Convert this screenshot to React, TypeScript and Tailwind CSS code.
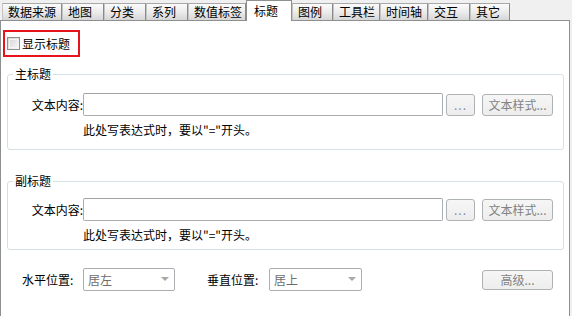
import React from "react";

const tabs: { label: string; w: string; selected?: boolean }[] = [
  { label: "数据来源", w: "w-[60px]" },
  { label: "地图", w: "w-[42px]" },
  { label: "分类", w: "w-[42px]" },
  { label: "系列", w: "w-[42px]" },
  { label: "数值标签", w: "w-[58px]" },
  { label: "标题", w: "w-[46px]", selected: true },
  { label: "图例", w: "w-[41px]" },
  { label: "工具栏", w: "w-[47px]" },
  { label: "时间轴", w: "w-[48px]" },
  { label: "交互", w: "w-[42px]" },
  { label: "其它", w: "w-[40px]" },
];

function Tab({ label, w, selected }: { label: string; w: string; selected?: boolean }) {
  if (selected) {
    return (
      <div className={`${w} h-[21px] -mb-px bg-white border border-b-0 border-[#8e8f8f] pl-[7px] pt-[2px] leading-[16px]`}>
        {label}
      </div>
    );
  }
  return (
    <div
      className={`${w} h-[17px] border border-b-0 border-l-[#c4c4c4] border-t-[#a8a8a8] border-r-[#8a8a8a] bg-linear-to-b from-[#fbfbfb] via-[#ececec] to-[#d6d6d6] pl-[5px] leading-[16px]`}
    >
      {label}
    </div>
  );
}

function DisabledButton({ children, w, h }: { children: React.ReactNode; w: string; h: string }) {
  return (
    <div
      className={`${w} ${h} flex items-center justify-center border border-[#adb2b5] rounded-[3px] bg-linear-to-b from-[#f6f6f6] to-[#ededed] text-[#838383]`}
    >
      {children}
    </div>
  );
}

function Arrow() {
  return (
    <svg width="8" height="5" viewBox="0 0 8 5">
      <polygon points="0,0 8,0 4,4" fill="#a7a7a7" />
    </svg>
  );
}

function Select({ value, w }: { value: string; w: string }) {
  return (
    <div
      className={`${w} h-[23px] flex items-center justify-between border border-[#abadb3] rounded-[2px] bg-white pl-[4px] pr-[5px] text-[#6d6d6d]`}
    >
      <span>{value}</span>
      <Arrow />
    </div>
  );
}

function TitleGroup({ title, mt, pt, pb }: { title: string; mt: string; pt: string; pb: string }) {
  return (
    <fieldset className={`${mt} ml-[6px] w-[557px] border border-[#d5dfe5] rounded-[3px] ${pt} ${pb}`}>
      <legend className="ml-[5px] px-[2px] leading-[16px]">{title}</legend>
      <div className="flex items-center">
        <div className="w-[75px] text-right">文本内容:</div>
        <div className="w-[360px] h-[23px] border border-[#abadb3] border-t-[#a3a3a3] rounded-[2px] bg-white" />
        <div className="ml-[3px]">
          <DisabledButton w="w-[29px]" h="h-[22px]">
            <span className="text-[#8a8aa8] tracking-[1px]">...</span>
          </DisabledButton>
        </div>
        <div className="ml-[7px]">
          <DisabledButton w="w-[71px]" h="h-[22px]">
            文本样式...
          </DisabledButton>
        </div>
      </div>
      <div className="pl-[75px] mt-[6px] leading-[16px]">此处写表达式时，要以"="开头。</div>
    </fieldset>
  );
}

export default function App() {
  return (
    <div className="w-[572px] h-[316px] bg-[#f0f0f0] overflow-hidden font-['Noto_Sans_CJK_SC','Noto_Sans',sans-serif] text-[12px] leading-[16px] text-black">
      <div className="relative z-10 flex items-end h-[20px] pl-[2px]">
        {tabs.map((t) => (
          <Tab key={t.label} {...t} />
        ))}
      </div>
      <div className="w-[570px] h-[296px] bg-white border-l border-t border-r border-[#8e8f8f] flex flex-col">
        <div className="mt-[9px] ml-[2px] w-[77px] h-[27px] border-2 border-[#e8141b] flex items-center pl-[2px]">
          <span className="w-[13px] h-[13px] border border-[#8e8f8f] bg-linear-to-br from-[#d4d4d4] to-[#f9f9f9] p-px">
            <span className="block w-full h-full border border-[#f4f4f4]" />
          </span>
          <span className="ml-[2px]">显示标题</span>
        </div>

        <TitleGroup title="主标题" mt="mt-[9px]" pt="pt-[11px]" pb="pb-[11px]" />
        <TitleGroup title="副标题" mt="mt-[23px]" pt="pt-[9px]" pb="pb-[6px]" />

        <div className="mt-[18px] flex items-center pl-[21px]">
          <div className="w-[61px]">水平位置:</div>
          <Select value="居左" w="w-[92px]" />
          <div className="ml-[32px] w-[62px]">垂直位置:</div>
          <Select value="居上" w="w-[93px]" />
          <div className="ml-[120px]">
            <DisabledButton w="w-[71px]" h="h-[20px]">
              高级...
            </DisabledButton>
          </div>
        </div>
      </div>
    </div>
  );
}
